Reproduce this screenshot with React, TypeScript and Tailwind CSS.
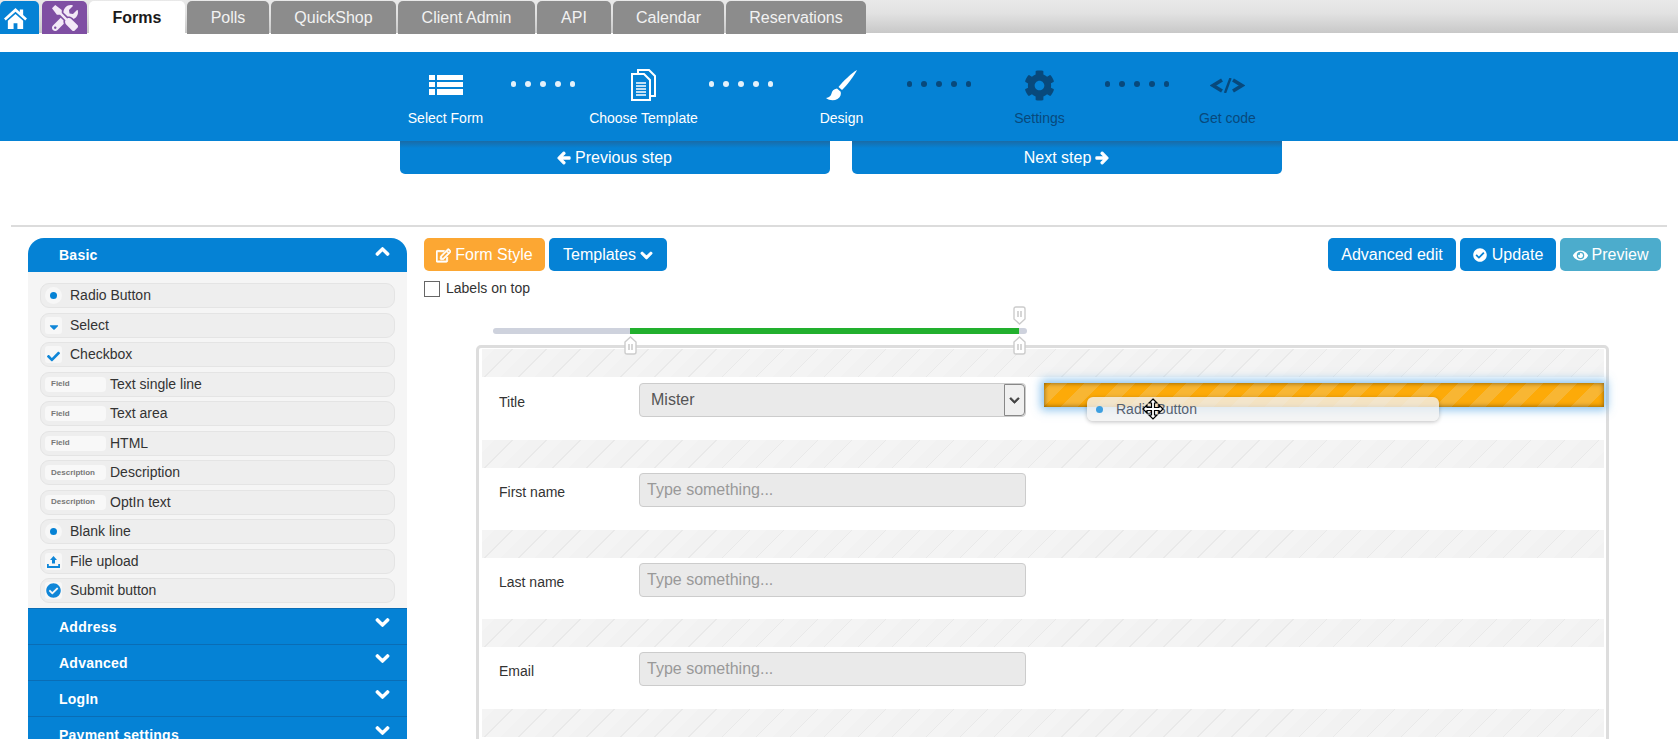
import React from 'react'
import {
  FaTools, FaCog, FaArrowLeft, FaArrowRight,
  FaChevronUp, FaChevronDown, FaRegEdit, FaCheckCircle, FaEye, FaCheck, FaCaretDown,
} from 'react-icons/fa'

const tabs = [
  { name: 'Polls', w: 'w-[82px]' },
  { name: 'QuickShop', w: 'w-[125px]' },
  { name: 'Client Admin', w: 'w-[137px]' },
  { name: 'API', w: 'w-[74px]' },
  { name: 'Calendar', w: 'w-[111px]' },
  { name: 'Reservations', w: 'w-[140px]' },
]

const HomeIcon = () => (
  <svg width="23" height="22" viewBox="0 0 24 23" fill="currentColor">
    <path d="M12 1L0 12l1.800 2L12 5l10.200 9 1.800-2-4-3.600V2.500h-3.500v2.700z" />
    <path d="M4 14.500V23h6v-6h4v6h6v-8.500L12 7.300z" />
  </svg>
)

const ListIcon = () => (
  <svg width="34" height="20" viewBox="0 0 34 20" fill="white">
    <rect x="0" y="0" width="6" height="5" />
    <rect x="8" y="0" width="26" height="5" />
    <rect x="0" y="7" width="6" height="5" />
    <rect x="8" y="7" width="26" height="5" />
    <rect x="0" y="14" width="6" height="6" />
    <rect x="8" y="14" width="26" height="6" />
  </svg>
)

const DocsIcon = () => (
  <svg width="25" height="32" viewBox="0 0 25 32" fill="none" stroke="white" strokeWidth="2">
    <path d="M7 4V1h11l6 6v20h-4" />
    <path d="M1 5h12l6 6v20H1z" />
    <path d="M5 14h10M5 17h10M5 20h10M5 23h10M5 26h10" strokeWidth="1.3" />
  </svg>
)

const BrushIcon = () => (
  <svg width="31" height="31" viewBox="0 0 31 31" fill="white">
    <path d="M31 0C26 3 17 11 12.500 17l3.500 3C21 15.500 28 6 31 0z" />
    <path d="M11 18.500c-3.500.5-5 2.500-5.500 5C5 26 3 27.500 0 28c3 2.500 8 3 11.500 1 3-1.800 3.800-4.500 3.200-7.300z" />
  </svg>
)

const CodeIcon = () => (
  <svg width="35" height="15" viewBox="0 0 35 15" fill="none" stroke="currentColor" strokeWidth="3.6">
    <path d="M12 2L3 7.500 12 13" />
    <path d="M20.500 0L15 15" strokeWidth="2.400" />
    <path d="M23 2l9 5.500L23 13" />
  </svg>
)

const UploadIcon = () => (
  <svg width="13" height="13" viewBox="0 0 13 13" fill="currentColor">
    <path d="M6.500 1L10 5H8v3.500H5V5H3z" />
    <path d="M0 9h1.800v2h9.400V9H13v4H0z" />
  </svg>
)

const Dots = ({ dark }: { dark?: boolean }) => (
  <div className="w-[68px] h-[32px] pr-[3px] flex items-center justify-center gap-[9px]">
    {[0, 1, 2, 3, 4].map((i) => (
      <span key={i} className={dark ? 'w-[6px] h-[6px] rounded-full bg-[#08497c]' : 'w-[6px] h-[6px] rounded-full bg-[#e4f1fa]'} />
    ))}
  </div>
)

const Step = ({ icon, label, dark, last }: { icon: React.ReactNode; label: string; dark?: boolean; last?: boolean }) => (
  <div className={`${last ? 'w-[110px]' : 'w-[130px]'} flex flex-col items-center ${dark ? 'text-[#08497c]' : 'text-white'}`}>
    <div className="h-[34px] flex items-center justify-center">{icon}</div>
    <div className="text-[14px] leading-[16px] mt-[8px]">{label}</div>
  </div>
)

const Dot = () => (
  <span className="w-[17px] h-[17px] rounded-full bg-[#f7f7f7] flex items-center justify-center shrink-0">
    <span className="w-[7px] h-[7px] rounded-full bg-[#0582d5]" />
  </span>
)

const Chip = ({ children }: { children: React.ReactNode }) => (
  <span className="w-[17px] h-[17px] rounded-[3px] bg-[#f7f7f7] flex items-center justify-center shrink-0 text-[#0f86d8]">{children}</span>
)

const TextChip = ({ text }: { text: string }) => (
  <span className="w-[61px] h-[15px] rounded-[4px] bg-[#f8f8f8] flex items-center pl-[6px] shrink-0 text-[8px] font-bold text-[#777]">{text}</span>
)

const items: { label: string; chip: React.ReactNode; wide?: boolean }[] = [
  { label: 'Radio Button', chip: <Dot /> },
  { label: 'Select', chip: <Chip><FaCaretDown size={14} className="mt-[3px]" /></Chip> },
  { label: 'Checkbox', chip: <Chip><FaCheck size={13} className="mt-[3px]" /></Chip> },
  { label: 'Text single line', chip: <TextChip text="Field" />, wide: true },
  { label: 'Text area', chip: <TextChip text="Field" />, wide: true },
  { label: 'HTML', chip: <TextChip text="Field" />, wide: true },
  { label: 'Description', chip: <TextChip text="Description" />, wide: true },
  { label: 'OptIn text', chip: <TextChip text="Description" />, wide: true },
  { label: 'Blank line', chip: <Dot /> },
  { label: 'File upload', chip: <Chip><UploadIcon /></Chip> },
  { label: 'Submit button', chip: <Chip><FaCheckCircle size={15} /></Chip> },
]

const sections = ['Address', 'Advanced', 'LogIn', 'Payment settings']

const Stripes = () => (
  <div className="h-[28px] bg-[repeating-linear-gradient(-45deg,#f2f2f2_0,#f2f2f2_12px,#f4f4f4_12px,#f4f4f4_23px,#e9e9e9_23px,#e9e9e9_24px)]" />
)

const FieldRow = ({ label }: { label: string }) => (
  <div className="h-[61.5px] flex items-start pt-[5px]">
    <div className="w-[157px] pl-[17px] text-[14px] leading-[16px] text-[#333] mt-[11px]">{label}</div>
    <input
      placeholder="Type something..."
      className="w-[387px] h-[34px] bg-[#eaeaea] border border-[#ccc] rounded-[4px] pl-[7px] text-[16px] outline-none placeholder:text-[#999]"
    />
  </div>
)

const Handle = ({ up, className }: { up?: boolean; className: string }) => (
  <svg width="13" height="19" viewBox="0 0 13 19" className={className}>
    <path
      d={up ? 'M1 6l5.500-5 5.500 5v10q0 2-2 2H3q-2 0-2-2z' : 'M1 3q0-2 2-2h7q2 0 2 2v10l-5.500 5L1 13z'}
      fill="white"
      stroke="#ccc"
      strokeWidth="1.4"
    />
    <path d={up ? 'M5 8v6M8 8v6' : 'M5 5v6M8 5v6'} stroke="#bbb" strokeWidth="1.2" />
  </svg>
)

const MoveCursor = () => (
  <svg width="22" height="22" viewBox="0 0 22 22" className="absolute left-[55px] top-[1px]">
    <path
      d="M11 1l4 4h-2.500v4.500H17V7l4 4-4 4v-2.500h-4.500V17H15l-4 4-4-4h2.500v-4.500H5V15l-4-4 4-4v2.500h4.500V5H7z"
      fill="white"
      stroke="black"
      strokeWidth="1.2"
    />
  </svg>
)

const App = () => {
  return (
    <div className="w-full h-[739px] overflow-hidden bg-white font-['Liberation_Sans',Arial,sans-serif]">
      {/* top tabs */}
      <div className="h-[33px] bg-[linear-gradient(#e9e9e9,#e2e2e2_40%,#c8c8c8)] flex items-start pt-px">
        <div className="w-[39px] h-[33px] pr-[9px] bg-[#0582d5] rounded-t-[5px] flex items-center justify-center text-white mr-[3px]">
          <HomeIcon />
        </div>
        <div className="w-[45px] h-[33px] bg-[#7f4fa3] rounded-t-[5px] flex items-center justify-center text-[#f3e9f7] mr-[2px]">
          <FaTools size={26} />
        </div>
        <div className="w-[96px] h-[33px] bg-white rounded-t-[5px] flex items-center justify-center text-[16px] font-bold text-[#1a1a1a] mr-[2px]">
          Forms
        </div>
        {tabs.map((t) => (
          <div key={t.name} className={`${t.w} h-[33px] bg-[#8c8c8c] rounded-t-[5px] flex items-center justify-center text-[16px] text-[#f2f2f2] mr-[2px]`}>
            {t.name}
          </div>
        ))}
      </div>

      {/* wizard steps */}
      <div className="mt-[19px] h-[89px] bg-[#0582d5] flex justify-center pt-[16px] pr-[15px]">
        <Step icon={<ListIcon />} label="Select Form" />
        <Dots />
        <Step icon={<DocsIcon />} label="Choose Template" />
        <Dots />
        <Step icon={<BrushIcon />} label="Design" />
        <Dots dark />
        <Step icon={<FaCog size={31} />} label="Settings" dark />
        <Dots dark />
        <Step icon={<CodeIcon />} label="Get code" dark last />
      </div>

      <div className="flex justify-center gap-[22px] pl-[3px]">
        <button className="w-[430px] h-[33px] pt-px rounded-b-[5px] bg-[linear-gradient(#1a6ba6,#0582d5_7px)] text-white text-[16px] flex items-center justify-center gap-[4px]">
          <FaArrowLeft size={14} strokeWidth={40} /> Previous step
        </button>
        <button className="w-[430px] h-[33px] pt-px rounded-b-[5px] bg-[linear-gradient(#1a6ba6,#0582d5_7px)] text-white text-[16px] flex items-center justify-center gap-[4px]">
          Next step <FaArrowRight size={14} strokeWidth={40} />
        </button>
      </div>

      <div className="mt-[51px] mx-[11px] h-[2px] bg-[#dcdcdc]" />

      <div className="mt-[11px] flex pl-[28px] pr-[17px]">
        {/* sidebar */}
        <div className="w-[379px] shrink-0 mr-[17px]">
          <div className="h-[34px] bg-[#0582d5] rounded-t-[16px] relative flex items-center pl-[31px] text-white text-[14px] font-bold tracking-[0.25px]">
            Basic
            <FaChevronUp size={15} strokeWidth={40} className="absolute right-[17px] top-[6px]" />
          </div>
          <div className="bg-[#f5f5f5] pt-[11px] pb-[5px] px-[12px] flex flex-col gap-[4.5px]">
            {items.map((it) => (
              <div key={it.label} className="h-[25px] rounded-[9px] bg-[#eeeeee] border border-[#e4e4e4] flex items-center pl-[4px] gap-[8px] text-[14px] text-[#333]">
                {it.chip}
                <span className={it.wide ? '-ml-[4px]' : ''}>{it.label}</span>
              </div>
            ))}
          </div>
          {sections.map((s) => (
            <div key={s} className="h-[36px] pt-px bg-[#0582d5] border-t border-[#0a6db5] relative flex items-center pl-[31px] text-white text-[14px] font-bold tracking-[0.25px]">
              {s}
              <FaChevronDown size={15} strokeWidth={40} className="absolute right-[17px] top-[6px]" />
            </div>
          ))}
        </div>

        {/* editor */}
        <div className="flex-1 min-w-0">
          <div className="flex h-[33px] text-white text-[16px]">
            <button className="w-[121px] pt-px rounded-[5px] bg-[#fca733] flex items-center justify-center gap-[4px]">
              <FaRegEdit size={15} strokeWidth={30} /> Form Style
            </button>
            <button className="w-[118px] pt-px ml-[4px] rounded-[5px] bg-[#0582d5] flex items-center justify-center gap-[4px]">
              Templates <FaChevronDown size={13} strokeWidth={40} />
            </button>
            <button className="w-[128px] pt-px ml-auto rounded-[5px] bg-[#0582d5]">Advanced edit</button>
            <button className="w-[96px] pt-px ml-[4px] rounded-[5px] bg-[#0582d5] flex items-center justify-center gap-[5px]">
              <FaCheckCircle size={14} /> Update
            </button>
            <button className="w-[101px] pt-px ml-[4px] rounded-[5px] bg-[#4caccc] flex items-center justify-center gap-[4px]">
              <FaEye size={15} /> Preview
            </button>
          </div>

          <label className="mt-[10px] flex items-center gap-[6px] text-[14px] text-[#333] h-[16px]">
            <span className="w-[16px] h-[16px] border border-[#666] bg-white" />
            <span className="-mt-[1px]">Labels on top</span>
          </label>

          {/* range slider */}
          <div className="relative mt-[31px] ml-[69px] w-[534px] h-[6px] rounded-full bg-[#ced2dd]">
            <div className="absolute left-[137px] w-[389px] top-0 h-[6px] bg-[#22b02e]" />
            <Handle className="absolute left-[520px] -top-[22px]" />
            <Handle up className="absolute left-[131px] top-[8px] z-10" />
            <Handle up className="absolute left-[520px] top-[8px] z-10" />
          </div>

          {/* form preview */}
          <div className="mt-[11px] ml-[52px] w-[1133px] border-[3px] border-[#dddddd] rounded-[5px] pt-[1px] pl-[3px] pr-[2px] pb-[40px]">
            <Stripes />
            <div className="h-[63px] flex items-start pt-[6px] relative">
              <div className="w-[157px] pl-[17px] text-[14px] leading-[16px] text-[#333] mt-[11px]">Title</div>
              <div className="w-[387px] h-[34px] bg-[#eaeaea] border border-[#ccc] rounded-[4px] flex items-center pl-[11px] text-[16px] text-[#555] relative">
                Mister
                <span className="absolute right-0 top-0 bottom-0 w-[21px] border border-[#888] flex items-center justify-center bg-[#f0f0f0] rounded-r-[4px] text-[#444]">
                  <FaChevronDown size={11} strokeWidth={30} />
                </span>
              </div>
              <div className="ml-[18px] flex-1 h-[24px] bg-[repeating-linear-gradient(-45deg,#fdaa08_0,#fdaa08_12px,#f8b633_12px,#f8b633_24px)] shadow-[0_0_9px_3px_rgba(90,170,230,0.7),inset_0_0_5px_rgba(0,0,0,0.5)]" />
              {/* dragged item */}
              <div className="absolute left-[605px] top-[20px] w-[352px] h-[24px] rounded-[6px] bg-[#f1f1f1]/80 shadow-[0_1px_4px_rgba(0,0,0,0.25)] flex items-center pl-[9px] gap-[13px] text-[14px] text-[#55606e]">
                <span className="w-[7px] h-[7px] rounded-full bg-[#3d9fe0]" />
                Radio Button
                <MoveCursor />
              </div>
            </div>
            <Stripes />
            <FieldRow label="First name" />
            <Stripes />
            <FieldRow label="Last name" />
            <Stripes />
            <FieldRow label="Email" />
            <Stripes />
          </div>
        </div>
      </div>
    </div>
  )
}

export default App
